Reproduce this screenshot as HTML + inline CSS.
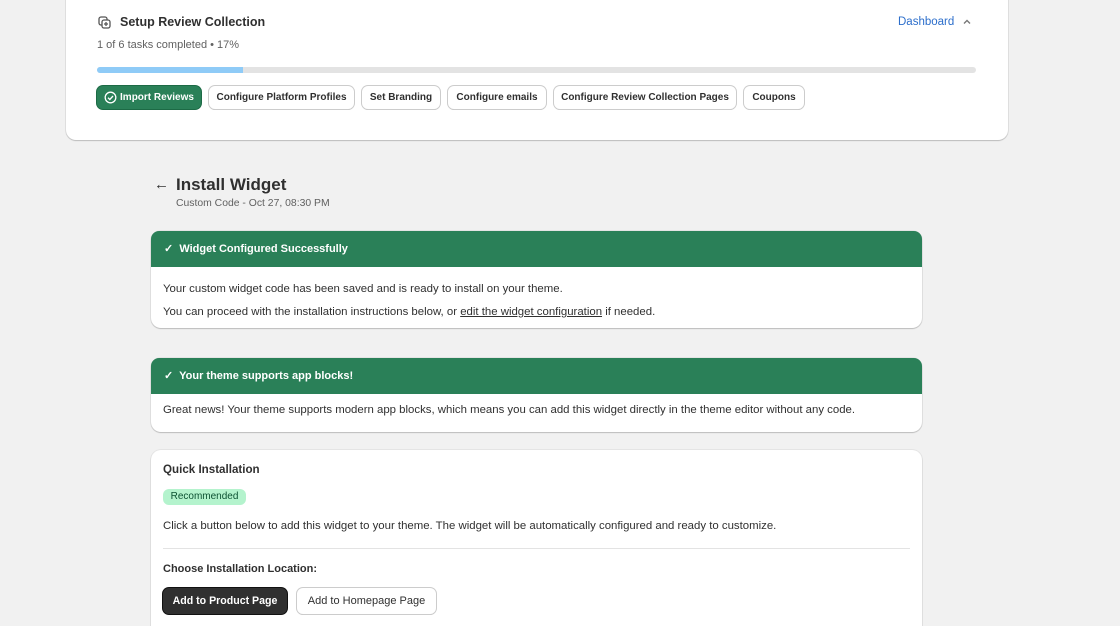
<!DOCTYPE html>
<html><head><style>
*{box-sizing:border-box;margin:0;padding:0}
html,body{width:1120px;height:626px;overflow:hidden}
body{background:#f1f1f1;font-family:"Liberation Sans",sans-serif;color:#303030;font-size:11.4px;position:relative}
.a{position:absolute}
.card{background:#fff;border-radius:10px;box-shadow:0 1px 1px rgba(0,0,0,.18),0 0 0 1px rgba(0,0,0,.05)}
.btn{position:absolute;top:86px;height:23px;border-radius:6px;background:#fff;box-shadow:0 0 0 1px #ccc,0 1px 0 #bbb;font-weight:bold;font-size:10px;line-height:23px;text-align:center;color:#303030}
.gh{height:36px;background:#2a8058;color:#fff;font-weight:bold;font-size:11px;line-height:36px;padding-left:13px;border-radius:8px 8px 0 0}
</style></head><body>
<div class="card a" style="left:66px;top:-12px;width:942px;height:152px"></div>
<svg class="a" style="left:98px;top:16px" width="13" height="13" viewBox="0 0 13 13" fill="none" stroke="#555" stroke-width="1.3"><rect x="1" y="1" width="8" height="8" rx="2"/><rect x="4" y="4" width="8" height="8" rx="2" fill="#fff"/><path d="M8 6v4M6 8h4"/></svg>
<div class="a" style="left:120px;top:15px;font-weight:bold;font-size:12.5px">Setup Review Collection</div>
<div class="a" style="left:97px;top:39px;color:#616161;font-size:11px">1 of 6 tasks completed • 17%</div>
<div class="a" style="left:898px;top:16px;color:#2c6ecb;font-size:11.5px">Dashboard</div>
<svg class="a" style="left:962px;top:17px" width="10" height="10" viewBox="0 0 10 10" fill="none" stroke="#777" stroke-width="1.4"><path d="M2 6.5l3-3 3 3"/></svg>
<div class="a" style="left:97px;top:67px;width:879px;height:6px;background:#e3e3e3;border-radius:3px"></div>
<div class="a" style="left:97px;top:67px;width:146px;height:6px;background:#8fcbf7;border-radius:3px 0 0 3px"></div>
<div class="btn" style="left:97px;width:104px;background:#2a8058;color:#fff;box-shadow:0 0 0 1px #1c6a45;padding-left:16px">Import Reviews</div>
<svg class="a" style="left:104px;top:91px" width="13" height="13" viewBox="0 0 13 13" fill="none" stroke="#fff" stroke-width="1.3"><circle cx="6.5" cy="6.5" r="5.3"/><path d="M4 6.7l1.8 1.8L9 5"/></svg>
<div class="btn" style="left:209px;width:145px">Configure Platform Profiles</div>
<div class="btn" style="left:362px;width:78px">Set Branding</div>
<div class="btn" style="left:448px;width:98px">Configure emails</div>
<div class="btn" style="left:554px;width:182px">Configure Review Collection Pages</div>
<div class="btn" style="left:744px;width:60px">Coupons</div>

<div class="a" style="left:154px;top:176px;font-size:15px">←</div>
<div class="a" style="left:176px;top:175px;font-weight:bold;font-size:17px">Install Widget</div>
<div class="a" style="left:176px;top:198px;color:#616161;font-size:10.4px">Custom Code - Oct 27, 08:30 PM</div>

<div class="card a" style="left:151px;top:231px;width:771px;height:97px"><div class="gh">✓&nbsp; Widget Configured Successfully</div>
<div style="padding:11px 12px 0;line-height:23px">Your custom widget code has been saved and is ready to install on your theme.<br>You can proceed with the installation instructions below, or <u>edit the widget configuration</u> if needed.</div></div>

<div class="card a" style="left:151px;top:358px;width:771px;height:74px"><div class="gh">✓&nbsp; Your theme supports app blocks!</div>
<div style="padding:10px 12px 0">Great news! Your theme supports modern app blocks, which means you can add this widget directly in the theme editor without any code.</div></div>

<div class="card a" style="left:151px;top:450px;width:771px;height:200px"></div>
<div class="a" style="left:163px;top:463px;font-weight:bold;font-size:11.6px">Quick Installation</div>
<div class="a" style="left:163px;top:489px;height:16px;width:83px;background:#b4f3cd;border-radius:6px;color:#0c5132;font-size:10px;line-height:16px;text-align:center">Recommended</div>
<div class="a" style="left:163px;top:520px">Click a button below to add this widget to your theme. The widget will be automatically configured and ready to customize.</div>
<div class="a" style="left:163px;top:548px;width:747px;height:1px;background:#e3e3e3"></div>
<div class="a" style="left:163px;top:563px;font-weight:bold;font-size:11px">Choose Installation Location:</div>
<div class="btn" style="left:163px;top:588px;width:124px;height:26px;line-height:26px;font-size:10.6px;background:#303030;color:#fff;box-shadow:0 0 0 1px #111">Add to Product Page</div>
<div class="btn" style="left:297px;top:588px;width:139px;height:26px;line-height:26px;font-size:11px;font-weight:normal">Add to Homepage Page</div>
</body></html>
